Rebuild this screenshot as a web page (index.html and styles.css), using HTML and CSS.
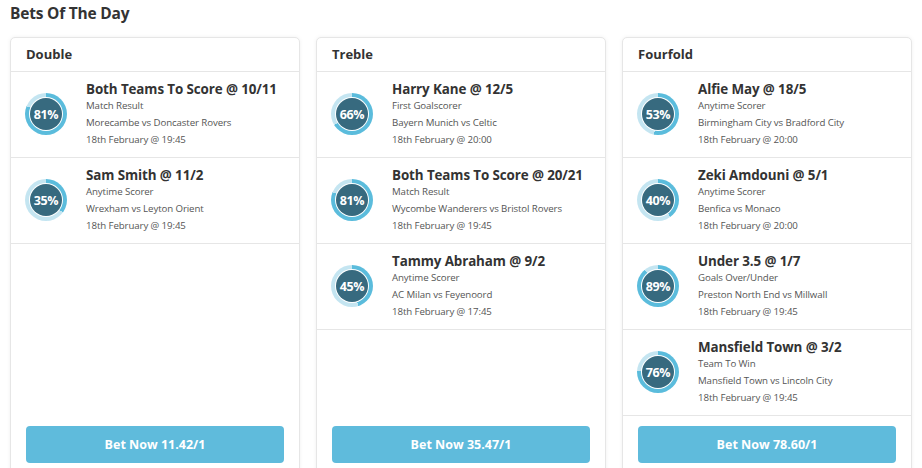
FILE: index.html
```html
<!DOCTYPE html>
<html>
<head>
<meta charset="utf-8">
<link rel="stylesheet" href="styles.css">
</head>
<body>
<h2 class="page-title">Bets Of The Day</h2>
<div class="cards">
  <div class="card">
    <div class="card-head">Double</div>
    <div class="item">
      <div class="ring" style="--p:81"><span>81%</span></div>
      <div class="info">
        <div class="title">Both Teams To Score @ 10/11</div>
        <div class="line">Match Result</div>
        <div class="line">Morecambe vs Doncaster Rovers</div>
        <div class="line">18th February @ 19:45</div>
      </div>
    </div>
    <div class="item">
      <div class="ring" style="--p:35"><span>35%</span></div>
      <div class="info">
        <div class="title">Sam Smith @ 11/2</div>
        <div class="line">Anytime Scorer</div>
        <div class="line">Wrexham vs Leyton Orient</div>
        <div class="line">18th February @ 19:45</div>
      </div>
    </div>
    <div class="spacer"></div>
    <div class="btn-wrap"><button class="btn">Bet Now 11.42/1</button></div>
  </div>
  <div class="card">
    <div class="card-head">Treble</div>
    <div class="item">
      <div class="ring" style="--p:66"><span>66%</span></div>
      <div class="info">
        <div class="title">Harry Kane @ 12/5</div>
        <div class="line">First Goalscorer</div>
        <div class="line">Bayern Munich vs Celtic</div>
        <div class="line">18th February @ 20:00</div>
      </div>
    </div>
    <div class="item">
      <div class="ring" style="--p:81"><span>81%</span></div>
      <div class="info">
        <div class="title">Both Teams To Score @ 20/21</div>
        <div class="line">Match Result</div>
        <div class="line">Wycombe Wanderers vs Bristol Rovers</div>
        <div class="line">18th February @ 19:45</div>
      </div>
    </div>
    <div class="item">
      <div class="ring" style="--p:45"><span>45%</span></div>
      <div class="info">
        <div class="title">Tammy Abraham @ 9/2</div>
        <div class="line">Anytime Scorer</div>
        <div class="line">AC Milan vs Feyenoord</div>
        <div class="line">18th February @ 17:45</div>
      </div>
    </div>
    <div class="spacer"></div>
    <div class="btn-wrap"><button class="btn">Bet Now 35.47/1</button></div>
  </div>
  <div class="card">
    <div class="card-head">Fourfold</div>
    <div class="item">
      <div class="ring" style="--p:53"><span>53%</span></div>
      <div class="info">
        <div class="title">Alfie May @ 18/5</div>
        <div class="line">Anytime Scorer</div>
        <div class="line">Birmingham City vs Bradford City</div>
        <div class="line">18th February @ 20:00</div>
      </div>
    </div>
    <div class="item">
      <div class="ring" style="--p:40"><span>40%</span></div>
      <div class="info">
        <div class="title">Zeki Amdouni @ 5/1</div>
        <div class="line">Anytime Scorer</div>
        <div class="line">Benfica vs Monaco</div>
        <div class="line">18th February @ 20:00</div>
      </div>
    </div>
    <div class="item">
      <div class="ring" style="--p:89"><span>89%</span></div>
      <div class="info">
        <div class="title">Under 3.5 @ 1/7</div>
        <div class="line">Goals Over/Under</div>
        <div class="line">Preston North End vs Millwall</div>
        <div class="line">18th February @ 19:45</div>
      </div>
    </div>
    <div class="item">
      <div class="ring" style="--p:76"><span>76%</span></div>
      <div class="info">
        <div class="title">Mansfield Town @ 3/2</div>
        <div class="line">Team To Win</div>
        <div class="line">Mansfield Town vs Lincoln City</div>
        <div class="line">18th February @ 19:45</div>
      </div>
    </div>
    <div class="spacer"></div>
    <div class="btn-wrap"><button class="btn">Bet Now 78.60/1</button></div>
  </div>
</div>
</body>
</html>
```

FILE: styles.css
```css
* { box-sizing: border-box; }
body {
  margin: 0;
  padding: 3px 10px 0 10px;
  font-family: "Open Sans", "DejaVu Sans", sans-serif;
  color: #333;
  background: #fff;
}
.page-title {
  margin: 0;
  font-size: 15.5px;
  font-weight: 700;
  line-height: 20px;
  color: #333;
  letter-spacing: -0.2px;
}
.cards {
  margin-top: 14px;
  display: grid;
  grid-template-columns: repeat(3, 290px);
  column-gap: 16px;
}
.card {
  display: flex;
  flex-direction: column;
  border: 1px solid #e6e6e6;
  border-radius: 5px;
  box-shadow: 0 0 4px rgba(0,0,0,0.06);
  background: #fff;
}
.card-head {
  height: 34px;
  padding: 0 15px 1px;
  display: flex;
  align-items: center;
  font-size: 13px;
  font-weight: 700;
  color: #333;
  border-bottom: 1px solid #e6e6e6;
}
.item {
  display: flex;
  align-items: center;
  height: 86px;
  padding: 0 15px 1px 14px;
  border-bottom: 1px solid #e6e6e6;
}
.ring {
  flex: none;
  width: 42px;
  height: 42px;
  border-radius: 50%;
  background: conic-gradient(#5bbcdc calc(var(--p) * 1%), #c4e5f1 0);
  display: flex;
  align-items: center;
  justify-content: center;
  position: relative;
}
.ring::before {
  content: "";
  position: absolute;
  inset: 4px;
  border-radius: 50%;
  background: #fff;
}
.ring span {
  position: relative;
  width: 32px;
  height: 32px;
  border-radius: 50%;
  background: #376a7f;
  color: #fff;
  font-size: 12.5px;
  font-weight: 700;
  display: flex;
  align-items: center;
  justify-content: center;
  letter-spacing: -0.3px;
}
.info {
  margin-left: 19px;
  display: flex;
  flex-direction: column;
}
.title {
  font-size: 13.4px;
  font-weight: 700;
  line-height: 16px;
  color: #333;
  letter-spacing: -0.1px;
}
.line {
  font-size: 9.7px;
  line-height: 17px;
  color: #555;
  letter-spacing: -0.1px;
}
.spacer { flex: 1; }
.btn-wrap {
  padding: 10px 15px 10px 15px;
}
.btn {
  display: block;
  width: 100%;
  height: 37px;
  border: none;
  border-radius: 4px;
  background: #5fbbdc;
  color: #fff;
  font-family: inherit;
  font-size: 12.5px;
  font-weight: 700;
}
```
